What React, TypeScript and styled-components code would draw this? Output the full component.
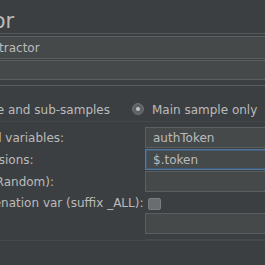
import React from "react";
import styled, { createGlobalStyle } from "styled-components";

const Global = createGlobalStyle`
  html, body { margin: 0; padding: 0; background: #3c3f41; }
  body { font-family: "DejaVu Sans", "Liberation Sans", sans-serif; }
`;

const Viewport = styled.div`
  width: 265px;
  height: 265px;
  overflow: hidden;
  background: #3c3f41;
  color: #bbbbbb;
  font-family: "DejaVu Sans", "Liberation Sans", sans-serif;
  font-size: 12px;
`;

/* The visible window is a crop of a wider panel: the panel starts 160px left of the view */
const Panel = styled.div`
  margin-left: -160px;
  width: 700px;
  display: flex;
  flex-direction: column;
`;

const TitleBar = styled.div`
  height: 34px;
  box-sizing: border-box;
  padding: 9px 0 0 19px;
  font-size: 21px;
  line-height: 25px;
  white-space: nowrap;
  border-bottom: 1px solid #53575a;
`;

const FieldRow = styled.div<{ $top: number }>`
  display: grid;
  grid-template-columns: 93px 1fr;
  align-items: center;
  padding-left: 10px;
  margin-top: ${(p) => p.$top}px;
  white-space: nowrap;
`;

const TextField = styled.input<{ $h: number; $focused?: boolean }>`
  display: block;
  width: 100%;
  height: ${(p) => p.$h}px;
  box-sizing: border-box;
  margin: 0;
  padding: 0 0 0 7px;
  border: 1px solid ${(p) => (p.$focused ? "#56789c" : "#5b5f61")};
  box-shadow: ${(p) => (p.$focused ? "inset 0 0 0 1px #3f5b78" : "none")};
  background: #45494a;
  color: #bbbbbb;
  font: inherit;
  outline: none;
`;

const Group = styled.div`
  margin-top: 5px;
  border-top: 1px solid #5a5d5f;
  box-shadow: 0 1px 0 #45484a;
  padding-top: 11px;
`;

const RadioRow = styled.div`
  display: flex;
  align-items: center;
  height: 24px;
  padding-left: 68px;
  gap: 22px;
  white-space: nowrap;
  border-bottom: 1px solid #45484a;
`;

const RadioOption = styled.label`
  display: flex;
  align-items: center;
  gap: 8px;
  padding-top: 2px;
`;

const RadioDot = styled.svg`
  flex: none;
  margin-top: -2px;
`;

const SettingsGrid = styled.div`
  display: grid;
  grid-template-columns: 250px 1fr;
  grid-template-rows: 21px 21px 21px 19px 21px;
  row-gap: 1px;
  padding-left: 55px;
  margin-top: 5px;
  align-items: center;
`;

const Label = styled.span`
  white-space: nowrap;
  padding-top: 1px;
`;

const CheckBox = styled.span`
  display: block;
  width: 13px;
  height: 12px;
  margin-left: 3px;
  margin-top: 3px;
  box-sizing: border-box;
  border: 1px solid #7b7e80;
  border-radius: 2px;
  background: #6a6d6f;
`;

const Divider = styled.div`
  grid-column: 2;
  height: 1px;
  margin-top: 4px;
  background: #46494b;
`;

function Radio({ selected }: { selected?: boolean }) {
  return (
    <RadioDot width="12" height="12" viewBox="0 0 12 12">
      <circle cx="6" cy="6" r="5.5" fill="#5f6264" stroke="#6d7072" strokeWidth="1" />
      {selected && <circle cx="6" cy="6" r="2" fill="#c4c4c4" />}
    </RadioDot>
  );
}

export default function App() {
  return (
    <>
      <Global />
      <Viewport>
        <Panel>
          <TitleBar>JSON Extractor</TitleBar>
          <FieldRow $top={2}>
            <Label>Name:</Label>
            <TextField $h={23} readOnly value="JSON Extractor" />
          </FieldRow>
          <FieldRow $top={1}>
            <Label>Comments:</Label>
            <TextField $h={20} readOnly value="" />
          </FieldRow>
          <Group>
            <RadioRow>
              <RadioOption>
                <Radio />
                Main sample and sub-samples
              </RadioOption>
              <RadioOption>
                <Radio selected />
                Main sample only
              </RadioOption>
              <RadioOption>
                <Radio />
                Sub-samples only
              </RadioOption>
            </RadioRow>
            <SettingsGrid>
              <Label>Names of created variables:</Label>
              <TextField $h={21} readOnly value="authToken" />
              <Label>JSON Path expressions:</Label>
              <TextField $h={21} $focused readOnly value="$.token" />
              <Label>Match No. (0 for Random):</Label>
              <TextField $h={21} readOnly value="" />
              <Label>Compute concatenation var (suffix _ALL):</Label>
              <CheckBox />
              <Label>Default Values:</Label>
              <TextField $h={21} readOnly value="" />
              <Divider />
            </SettingsGrid>
          </Group>
        </Panel>
      </Viewport>
    </>
  );
}
